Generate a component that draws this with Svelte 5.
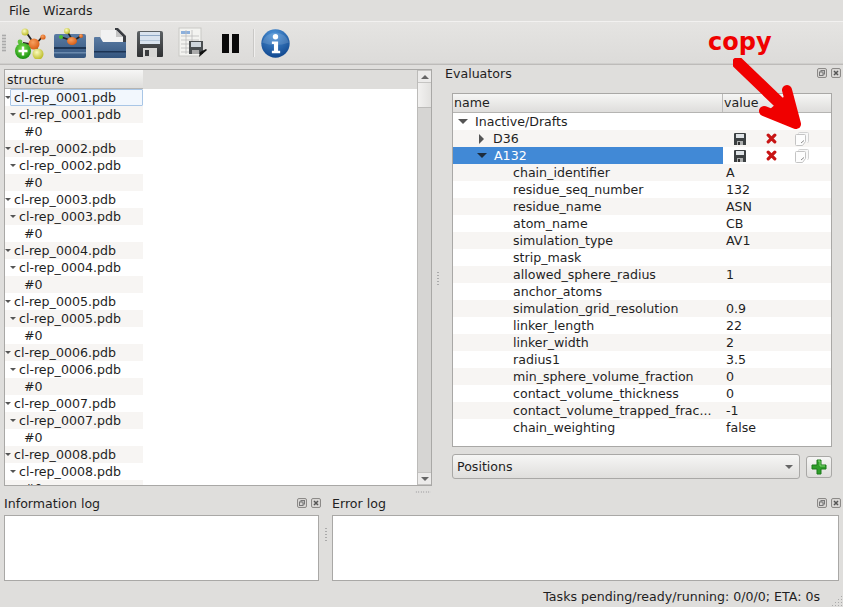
<script>
  const structures = ['0001','0002','0003','0004','0005','0006','0007','0008'];
  const rows = [];
  for (const s of structures) {
    rows.push({ text: `cl-rep_${s}.pdb`, level: 0, arrow: true });
    rows.push({ text: `cl-rep_${s}.pdb`, level: 1, arrow: true });
    rows.push({ text: '#0', level: 2, arrow: false });
  }
  const props = [
    ['chain_identifier','A'],['residue_seq_number','132'],['residue_name','ASN'],['atom_name','CB'],
    ['simulation_type','AV1'],['strip_mask',''],['allowed_sphere_radius','1'],['anchor_atoms',''],
    ['simulation_grid_resolution','0.9'],['linker_length','22'],['linker_width','2'],['radius1','3.5'],
    ['min_sphere_volume_fraction','0'],['contact_volume_thickness','0'],['contact_volume_trapped_frac...','-1'],
    ['chain_weighting','false']
  ];
</script>

{#snippet dockbtns()}
  <span class="dockbtns">
    <svg width="10" height="10" viewBox="0 0 10 10"><rect x=".5" y=".5" width="9" height="9" rx="1.5" fill="#d8d6d4" stroke="#8c8a88"/><rect x="4" y="2.5" width="3.5" height="3.5" fill="none" stroke="#777"/><rect x="2.5" y="4" width="3.5" height="3.5" fill="#d8d6d4" stroke="#777"/></svg>
    <svg width="10" height="10" viewBox="0 0 10 10"><rect x=".5" y=".5" width="9" height="9" rx="1.5" fill="#d8d6d4" stroke="#8c8a88"/><path d="M3 3l4 4M7 3l-4 4" stroke="#555" stroke-width="1.5"/></svg>
  </span>
{/snippet}

{#snippet floppy(s)}
  <svg width={s} height={s} viewBox="0 0 28 28">
    <path d="M1 3q0-2 2-2h22q2 0 2 2v23q0 1-1 1H2q-1 0-1-1z" fill="url(#fl)"/>
    <rect x="4" y="2" width="20" height="12" fill="#d9e3ee"/>
    <rect x="4" y="5" width="20" height="1" fill="#8fa8c4"/>
    <rect x="4" y="10" width="20" height="1" fill="#b5c6d8"/>
    <rect x="7" y="18" width="14" height="9" fill="#d6d6d4"/>
    <rect x="9" y="20" width="4" height="6" fill="#3a3c3e"/>
  </svg>
{/snippet}

{#snippet smallFloppy()}
  <svg class="ic" width="14" height="14" viewBox="0 0 14 14"><path d="M1 2q0-1 1-1h10q1 0 1 1v11H1z" fill="#3c4042"/><rect x="3" y="2" width="8" height="4" fill="#dfe3e6"/><rect x="4" y="9" width="6" height="4" fill="#aeb0b0"/><rect x="5" y="10" width="2" height="3" fill="#333"/></svg>
{/snippet}
{#snippet smallX()}
  <svg class="ic x" width="11" height="11" viewBox="0 0 11 11"><path d="M2.2 2.2l6.6 6.6M8.800 2.2l-6.600 6.600" stroke="#c81414" stroke-width="3.200" stroke-linecap="round"/></svg>
{/snippet}
{#snippet smallCopy()}
  <svg class="ic" width="14" height="14" viewBox="0 0 14 14"><path d="M3.500 1.500q0-1 1-1h8q1 0 1 1v8q0 1-1 1" fill="#f8f8f8" stroke="#d2d2d2"/><path d="M1.500 2.500h8q1 0 1 1v6l-3 4h-6q-1 0-1-1v-9q0-1 1-1z" fill="#fdfdfd" stroke="#c4c4c4"/><path d="M6 11l3-2.500" stroke="#8a8a8a"/></svg>
{/snippet}

<div class="app">
  <svg width="0" height="0" class="defs"><defs>
    <linearGradient id="fl" x1="0" y1="0" x2="0" y2="1"><stop offset="0" stop-color="#5d6265"/><stop offset="1" stop-color="#2f3133"/></linearGradient>
    <linearGradient id="bx" x1="0" y1="0" x2="0" y2="1"><stop offset="0" stop-color="#5a7ba3"/><stop offset="1" stop-color="#34557e"/></linearGradient>
    <radialGradient id="gr" cx=".45" cy=".35" r=".7"><stop offset="0" stop-color="#7fe04f"/><stop offset="1" stop-color="#0f8a0a"/></radialGradient>
    <radialGradient id="ye" cx=".4" cy=".35" r=".7"><stop offset="0" stop-color="#fbfbc0"/><stop offset="1" stop-color="#b8b81e"/></radialGradient>
    <radialGradient id="or" cx=".4" cy=".35" r=".7"><stop offset="0" stop-color="#f7a060"/><stop offset="1" stop-color="#d85a10"/></radialGradient>
    <radialGradient id="bl" cx=".45" cy=".2" r=".9"><stop offset="0" stop-color="#4d93d8"/><stop offset="1" stop-color="#0a3f86"/></radialGradient>
  </defs></svg>

  <nav class="menubar"><span>File</span><span>Wizards</span></nav>

  <div class="toolbar">
    <span class="grip"></span>
    <svg class="t0" width="32" height="32" viewBox="0 0 32 32">
      <path d="M12 5l9 13M9 16l12 2M21 18l8-9M21 18l6 12" stroke="#222" stroke-width="1.800"/>
      <circle cx="11" cy="5" r="3.500" fill="url(#ye)"/><circle cx="29" cy="10" r="2.600" fill="url(#or)"/>
      <circle cx="6" cy="15" r="2.400" fill="#5ec23a"/><circle cx="20" cy="17" r="5.500" fill="url(#or)"/>
      <circle cx="24" cy="27" r="5.500" fill="url(#ye)"/><circle cx="9" cy="24" r="8" fill="url(#gr)"/>
      <path d="M9 19.500v9M4.500 24h9" stroke="#fff" stroke-width="2.400"/>
    </svg>
    <svg class="t1" width="32" height="32" viewBox="0 0 32 32">
      <rect x="0" y="7" width="32" height="24" rx="2" fill="url(#bx)"/>
      <rect x="0" y="20" width="32" height="2" fill="#1c3454"/><rect x="0" y="25" width="32" height="1.500" fill="#6a89ad"/>
      <path d="M13 4l6 10M7 10l12 4M19 14l8-5" stroke="#222" stroke-width="1.500"/>
      <circle cx="13" cy="4" r="3" fill="url(#ye)"/><circle cx="7" cy="10" r="2" fill="#46c22e"/><circle cx="27" cy="9" r="2" fill="url(#or)"/>
      <ellipse cx="18" cy="14" rx="5" ry="4" fill="url(#or)"/>
    </svg>
    <svg class="t1" width="32" height="32" viewBox="0 0 32 32">
      <path d="M21 1h3l8 8v10H21z" fill="#3a3d42"/>
      <path d="M7 3h15l7 7v12H7z" fill="#f2f2f2"/><path d="M22 3v7h7z" fill="#c4c4c4"/>
      <path d="M0 11q0-1 1-1h5l3 5h23v15q0 1-1 1H1q-1 0-1-1z" fill="url(#bx)"/>
      <rect y="24" width="32" height="1.500" fill="#1c3454"/>
    </svg>
    <span class="t1 floppy">{@render floppy(28)}</span>
    <svg class="t2" width="30" height="32" viewBox="0 0 30 32">
      <rect x="1" y="1" width="22" height="28" fill="#f3f3f0" stroke="#c9c9c6"/>
      <rect x="3" y="4" width="9" height="3" fill="#8cb0dc"/>
      <path d="M3 9h18M3 13h18M3 17h18M3 21h18M3 25h18M8 3v24M14 3v24" stroke="#bbb" stroke-width=".8"/>
      <path d="M11 14h14v13H11z" fill="#4a4e50"/><rect x="13" y="15" width="10" height="5" fill="#cfd6dc"/><rect x="14" y="23" width="7" height="4" fill="#aaa"/>
      <path d="M21 30l8-7-1-1-6 3z" fill="#111"/>
    </svg>
    <span class="pause"><i></i><i></i></span>
    <span class="vsep"></span>
    <svg class="info" width="29" height="29" viewBox="0 0 28 28">
      <circle cx="14" cy="14" r="13.700" fill="url(#bl)"/>
      <path d="M1 13a13.500 13 0 0 1 26 0q-13 5-26 0z" fill="#fff" opacity=".14"/>
      <circle cx="14" cy="7.500" r="2.600" fill="#fff"/>
      <path d="M10.500 12h6v9h2v2.500h-8V21h2v-6.500h-2z" fill="#fff"/>
    </svg>
  </div>

  <div class="top">
    <section class="structure">
      <div class="tree">
        <div class="thead"><span>structure</span></div>
        {#each rows as r, i}
          <div class="row" class:alt={i % 2 === 1} style="padding-left: {r.level * 5}px">
            {#if r.arrow}<i class="tri"></i>{/if}
            <span class="lbl" class:cur={i === 0} class:hash={!r.arrow}>{r.text}</span>
          </div>
        {/each}
      </div>
      <div class="sb">
        <div class="sb-btn"><i class="up"></i></div>
        <div class="sb-thumb"></div>
        <div class="sb-track"></div>
        <div class="sb-btn"><i class="down"></i></div>
      </div>
    </section>
    <div class="vgrip"></div>
    <section class="evals">
      <header class="dtitle"><span>Evaluators</span>{@render dockbtns()}</header>
      <div class="etree">
        <div class="ehead"><span class="c1">name</span><span class="c2">value</span></div>
        <div class="erow"><div class="c1"><i class="etri down"></i><span>Inactive/Drafts</span></div></div>
        <div class="erow alt">
          <div class="c1 l1"><i class="etri right"></i><span>D36</span></div>
          <div class="c2 icons">{@render smallFloppy()}{@render smallX()}{@render smallCopy()}</div>
        </div>
        <div class="erow">
          <div class="c1 l1 sel"><i class="etri down dark"></i><span>A132</span></div>
          <div class="c2 icons">{@render smallFloppy()}{@render smallX()}{@render smallCopy()}</div>
        </div>
        {#each props as p, i}
          <div class="erow" class:alt={i % 2 === 0}>
            <div class="c1 l2">{p[0]}</div><div class="c2 val">{p[1]}</div>
          </div>
        {/each}
      </div>
      <div class="pick">
        <div class="combo"><span>Positions</span><i class="cb-arrow"></i></div>
        <button class="add" aria-label="Add">
          <svg width="16" height="16" viewBox="0 0 16 16"><path d="M6 1h4v5h5v4h-5v5H6v-5H1V6h5z" fill="#2f9e2a" stroke="#1c7a1a" stroke-linejoin="round"/><path d="M7 2h2v5h5" fill="none" stroke="#7fd66e"/></svg>
        </button>
      </div>
    </section>
  </div>

  <div class="hgrip"></div>

  <div class="bottom">
    <section class="log info-log">
      <header class="dtitle"><span>Information log</span>{@render dockbtns()}</header>
      <div class="logbox"></div>
    </section>
    <div class="vgrip small"></div>
    <section class="log err-log">
      <header class="dtitle"><span>Error log</span>{@render dockbtns()}</header>
      <div class="logbox"></div>
    </section>
  </div>

  <footer class="status"><span>Tasks pending/ready/running: 0/0/0; ETA: 0s</span><i class="sizegrip"></i></footer>

  <div class="annot">copy</div>
  <svg class="arrow" width="70" height="80" viewBox="0 0 70 80">
    <path d="M5 5L56 54" stroke="#f00000" stroke-width="12" stroke-linecap="round"/>
    <path d="M63 66L31 53M63 66L54 32" stroke="#f00000" stroke-width="10" stroke-linecap="round" fill="none"/>
    <path d="M36 52L54 36L62 66z" fill="#f00000"/>
  </svg>
</div>

<style>
  :global(body) { margin: 0; background: #dfdedc; }
  .app { width: 843px; height: 607px; position: relative; overflow: hidden; display: flex; flex-direction: column; background: #dfdedc; color: #1f1f1f; font: 12.6px/17px "DejaVu Sans", sans-serif; }
  .defs { position: absolute; }
  .menubar { height: 21px; display: flex; gap: 13px; padding: 0 9px; align-items: center; box-sizing: border-box; flex: none; }
  .toolbar { height: 44px; flex: none; display: flex; align-items: center; box-sizing: border-box; border-top: 1px solid #f2f1f0; border-bottom: 1px solid #bdbbb9; background: linear-gradient(#e5e4e2, #dcdbd9); box-shadow: inset 0 -1px 0 #cfcecc; padding-left: 2px; }
  .grip { width: 4px; height: 18px; margin-right: 8px; background-image: radial-gradient(#aaa 0.7px, transparent 0.9px); background-size: 2px 3px; }
  .t0 { margin-right: 8px; }
  .t1 { margin-right: 8px; }
  .floppy { display: block; height: 28px; margin-top: 1px; margin-right: 14px; margin-left: 2px; }
  .t2 { margin-right: 14px; }
  .pause { display: flex; gap: 3px; margin-right: 14px; }
  .pause i { width: 7px; height: 19px; background: #0a0a0a; }
  .vsep { width: 1px; height: 28px; background: #c9c8c6; box-shadow: 1px 0 0 #f0efee; margin-right: 7px; }
  .top { display: flex; height: 423px; flex: none; padding: 4px 0 0 4px; box-sizing: border-box; }
  .structure { width: 428px; height: 417px; flex: none; box-sizing: border-box; border: 1px solid #a9a8a6; background: #fff; display: flex; overflow: hidden; }
  .tree { flex: 1; min-width: 0; overflow: hidden; position: relative; }
  .thead { width: 136px; height: 18px; background: linear-gradient(#f6f6f5, #dedddb); border-bottom: 1px solid #b5b4b2; padding-left: 2px; line-height: 19px; }
  .tree::before { content: ""; position: absolute; left: 138px; right: 0; top: 0; height: 19px; background: #dedddb; }
  .row { width: 138px; height: 17px; line-height: 17px; display: flex; align-items: center; box-sizing: border-box; white-space: nowrap; }
  .row.alt { background: #f7f5f3; }
  .tri { width: 0; height: 0; border: 3px solid transparent; border-top: 3px solid #555; border-bottom: 0; margin-right: -1px; flex: none; }
  .lbl { box-sizing: border-box; height: 17px; padding-left: 4px; flex: none; }
  .lbl.cur { width: 133px; border: 1px solid #a9c6e6; background: #f2f7fd; line-height: 15px; border-radius: 1px; padding-left: 3px; }
  .lbl.hash { padding-left: 9px; }
  .sb { width: 13px; flex: none; display: flex; flex-direction: column; background: #d6d5d3; border-left: 1px solid #bcbbb9; }
  .sb-btn { height: 13px; flex: none; display: flex; align-items: center; justify-content: center; background: #ecebea; border-top: 1px solid #c5c4c2; border-bottom: 1px solid #c5c4c2; box-sizing: border-box; }
  .sb-thumb { height: 24px; background: linear-gradient(90deg, #f2f1f0, #e2e1df); border-bottom: 1px solid #bcbbb9; flex: none; }
  .sb-track { flex: 1; }
  .up { border: 4px solid transparent; border-bottom: 4px solid #666; border-top: 0; }
  .down { border: 4px solid transparent; border-top: 4px solid #666; border-bottom: 0; }
  .vgrip { width: 12px; flex: none; position: relative; }
  .vgrip::after { content: ""; position: absolute; left: 5px; top: 50%; height: 15px; width: 2px; margin-top: -8px; background-image: radial-gradient(#aaa 0.6px, transparent 0.8px); background-size: 2px 3px; }
  .evals { flex: 1; min-width: 0; padding-right: 11px; display: flex; flex-direction: column; position: relative; }
  .dtitle { height: 20px; display: flex; align-items: center; justify-content: space-between; }
  .evals .dtitle { margin: -6px -9px 10px 1px; }
  .dockbtns { display: flex; gap: 4px; margin-top: -1px; }
  .dockbtns svg { display: block; }
  .etree { height: 354px; box-sizing: border-box; border: 1px solid #a9a8a6; background: #fff; margin-left: 8px; overflow: hidden; }
  .ehead { display: flex; height: 18px; background: linear-gradient(#f6f6f5, #dedddb); border-bottom: 1px solid #b5b4b2; line-height: 18px; }
  .ehead .c1 { border-right: 1px solid #bdbcba; padding-left: 1px; }
  .ehead .c2 { padding-left: 1px; }
  .erow { display: flex; height: 17px; line-height: 17px; }
  .erow.alt { background: #f7f5f3; }
  .c1 { width: 270px; flex: none; display: flex; align-items: center; white-space: nowrap; box-sizing: border-box; padding-left: 5px; }
  .c1.l1 { padding-left: 26px; }
  .c1.l2 { padding-left: 60px; }
  .sel { background: #4189d6; color: #fff; padding-left: 24px !important; }
  .etri { flex: none; width: 0; height: 0; }
  .etri.down { border: 5px solid transparent; border-top: 5px solid #555; border-bottom: 0; margin-right: 7px; }
  .etri.down.dark { border-top-color: #1d2c3c; margin-right: 7px; }
  .etri.right { border: 5px solid transparent; border-left: 5px solid #555; border-right: 0; margin-right: 9px; }
  .c2.val { padding-left: 3px; }
  .icons { display: flex; align-items: center; padding-left: 10px; }
  .ic { display: block; flex: none; margin-right: 19px; }
  .ic.x { margin-right: 18px; }
  .pick { display: flex; gap: 6px; margin: 7px 0 0 8px; align-items: center; }
  .combo { flex: 1; height: 25px; box-sizing: border-box; border: 1px solid #a9a8a6; border-radius: 3px; background: linear-gradient(#f6f6f5, #dfdedc); display: flex; align-items: center; justify-content: space-between; padding: 0 6px 0 4px; }
  .cb-arrow { border: 4px solid transparent; border-top: 4px solid #666; border-bottom: 0; }
  .add { width: 26px; height: 22px; padding: 0; box-sizing: border-box; border: 1px solid #a9a8a6; border-radius: 3px; background: linear-gradient(#f6f6f5, #dfdedc); display: flex; align-items: center; justify-content: center; }
  .hgrip { height: 4px; flex: none; position: relative; }
  .hgrip::after { content: ""; position: absolute; left: 415px; width: 16px; height: 2px; top: 3px; background-image: radial-gradient(#aaa 0.6px, transparent 0.8px); background-size: 2.5px 2px; }
  .bottom { display: flex; height: 154px; flex: none; padding: 0 4px; box-sizing: border-box; }
  .log { display: flex; flex-direction: column; }
  .info-log { width: 315px; flex: none; }
  .err-log { flex: 1; min-width: 0; }
  .log .dtitle { height: 20px; margin: 1px -2px 2px 0; }
  .vgrip.small { width: 13px; height: 86px; }
  .vgrip.small::after { left: 6px; }
  .logbox { height: 66px; flex: none; box-sizing: border-box; border: 1px solid #a9a8a6; background: #fff; }
  .status { position: absolute; bottom: 0; left: 0; right: 0; height: 22px; display: flex; justify-content: flex-end; align-items: center; padding-right: 23px; box-sizing: border-box; }
  .sizegrip { position: absolute; right: 1px; bottom: 1px; width: 11px; height: 11px; background-image: radial-gradient(#aaa 0.6px, transparent 0.8px); background-size: 3px 3px; clip-path: polygon(100% 0, 100% 100%, 0 100%); }
  .annot { position: absolute; left: 708px; top: 28px; color: #f00000; font: bold 24px/28px "DejaVu Sans", sans-serif; }
  .arrow { position: absolute; left: 733px; top: 58px; }
</style>
